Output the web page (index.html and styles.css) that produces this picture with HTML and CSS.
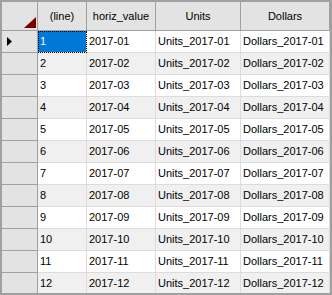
FILE: index.html
```html
<!DOCTYPE html>
<html>
<head>
<meta charset="utf-8">
<link rel="stylesheet" href="styles.css">
</head>
<body>
<div class="grid">
  <div class="row head">
    <div class="cell rh corner"><svg class="corner-tri" width="12" height="11" viewBox="0 0 12 11"><polygon points="12,0 12,11 0,11" fill="#7a0000"/></svg></div>
    <div class="cell hc">(line)</div>
    <div class="cell hc">horiz_value</div>
    <div class="cell hc">Units</div>
    <div class="cell hc">Dollars</div>
  </div>
  <div class="row odd"><div class="cell rh"><svg class="arrow" width="5" height="9" viewBox="0 0 5 9"><polygon points="0,0 5,4.5 0,9" fill="#000"/></svg></div><div class="cell dc sel">1</div><div class="cell dc">2017-01</div><div class="cell dc">Units_2017-01</div><div class="cell dc">Dollars_2017-01</div></div>
  <div class="row even"><div class="cell rh"></div><div class="cell dc">2</div><div class="cell dc">2017-02</div><div class="cell dc">Units_2017-02</div><div class="cell dc">Dollars_2017-02</div></div>
  <div class="row odd"><div class="cell rh"></div><div class="cell dc">3</div><div class="cell dc">2017-03</div><div class="cell dc">Units_2017-03</div><div class="cell dc">Dollars_2017-03</div></div>
  <div class="row even"><div class="cell rh"></div><div class="cell dc">4</div><div class="cell dc">2017-04</div><div class="cell dc">Units_2017-04</div><div class="cell dc">Dollars_2017-04</div></div>
  <div class="row odd"><div class="cell rh"></div><div class="cell dc">5</div><div class="cell dc">2017-05</div><div class="cell dc">Units_2017-05</div><div class="cell dc">Dollars_2017-05</div></div>
  <div class="row even"><div class="cell rh"></div><div class="cell dc">6</div><div class="cell dc">2017-06</div><div class="cell dc">Units_2017-06</div><div class="cell dc">Dollars_2017-06</div></div>
  <div class="row odd"><div class="cell rh"></div><div class="cell dc">7</div><div class="cell dc">2017-07</div><div class="cell dc">Units_2017-07</div><div class="cell dc">Dollars_2017-07</div></div>
  <div class="row even"><div class="cell rh"></div><div class="cell dc">8</div><div class="cell dc">2017-08</div><div class="cell dc">Units_2017-08</div><div class="cell dc">Dollars_2017-08</div></div>
  <div class="row odd"><div class="cell rh"></div><div class="cell dc">9</div><div class="cell dc">2017-09</div><div class="cell dc">Units_2017-09</div><div class="cell dc">Dollars_2017-09</div></div>
  <div class="row even"><div class="cell rh"></div><div class="cell dc">10</div><div class="cell dc">2017-10</div><div class="cell dc">Units_2017-10</div><div class="cell dc">Dollars_2017-10</div></div>
  <div class="row odd"><div class="cell rh"></div><div class="cell dc">11</div><div class="cell dc">2017-11</div><div class="cell dc">Units_2017-11</div><div class="cell dc">Dollars_2017-11</div></div>
  <div class="row even"><div class="cell rh"></div><div class="cell dc">12</div><div class="cell dc">2017-12</div><div class="cell dc">Units_2017-12</div><div class="cell dc">Dollars_2017-12</div></div>
</div>
</body>
</html>
```

FILE: styles.css
```css
html, body {
  margin: 0;
  padding: 0;
  background: #ffffff;
}
.grid {
  box-sizing: border-box;
  width: 332px;
  height: 295px;
  border: 2px solid #a0a0a0;
  overflow: hidden;
  font-family: "Liberation Sans", Arial, sans-serif;
  font-size: 11px;
  color: #000;
  background: #ffffff;
}
.row {
  display: grid;
  grid-template-columns: 36px 49px 69px 85px 89px;
  height: 22px;
}
.row.head {
  height: 29px;
}
.cell {
  box-sizing: border-box;
  border-right: 1px solid #dcdcdc;
  border-bottom: 1px solid #dcdcdc;
  display: flex;
  align-items: center;
  white-space: nowrap;
  overflow: hidden;
}
.row.even .dc {
  background: #f0f0f0;
}
.dc {
  padding-left: 2px;
  padding-bottom: 1px;
}
.hc {
  background: #e3e3e3;
  border-right-color: #a0a0a0;
  border-bottom-color: #a0a0a0;
  justify-content: center;
  font-size: 11px;
  padding-bottom: 1px;
}
.rh {
  background: #e3e3e3;
  border-right-color: #a0a0a0;
  border-bottom-color: #a0a0a0;
  padding-left: 5px;
}
.corner {
  align-items: flex-end;
  justify-content: flex-end;
  padding: 0 1px 2px 0;
}
.corner-tri {
  display: block;
}
.arrow {
  display: block;
}
.sel {
  background: #0078d7;
  color: #ffffff;
  outline: 1px dotted #000;
  outline-offset: -1px;
}
```
